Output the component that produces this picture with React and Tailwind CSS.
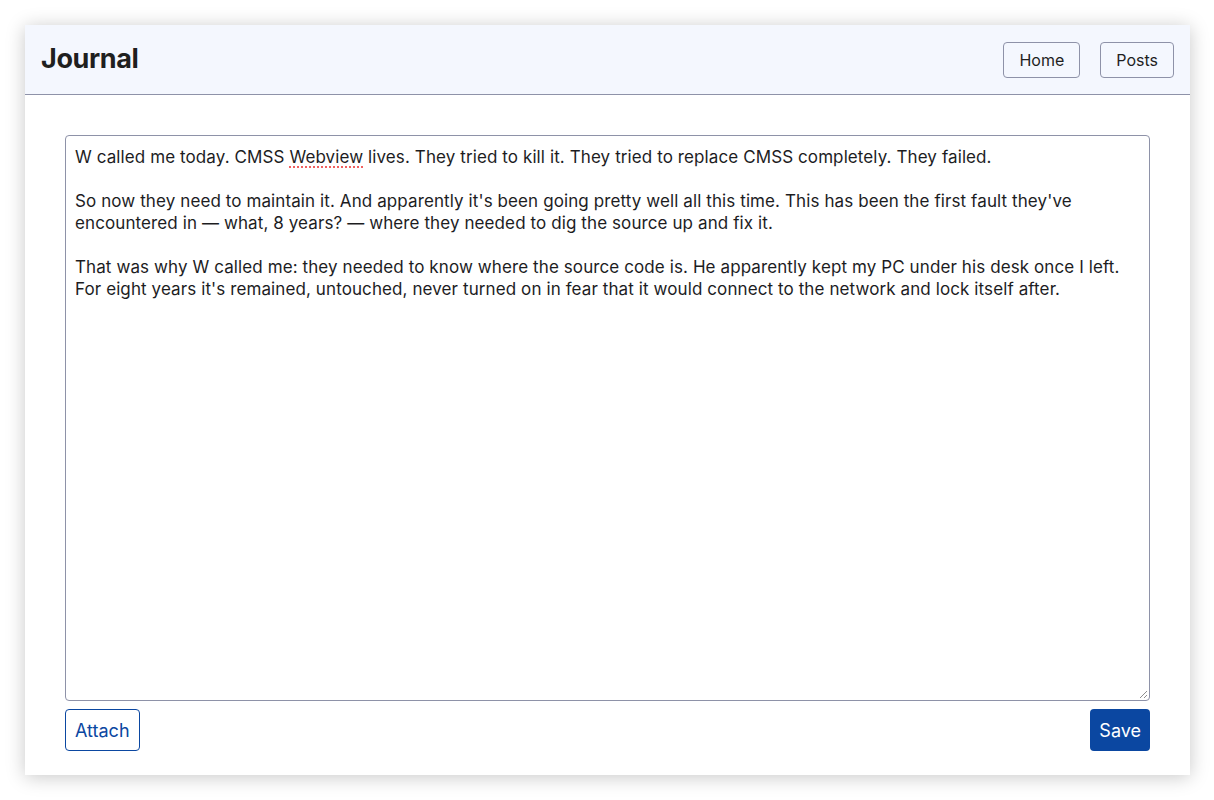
export default function App() {
  return (
    <div className="min-h-screen bg-white pt-[25px] pb-[25px] pl-[25px] pr-[24px]" style={{ fontFamily: 'Inter, "Noto Sans", sans-serif' }}>
      <div className="bg-white shadow-[0_2px_18px_rgba(0,0,0,0.22)]">
        {/* Header */}
        <div className="flex items-center justify-between h-[70px] px-4 bg-[#f4f7fe] border-b border-[#8e92a8]">
          <h1 className="text-[27px] font-bold text-[#1f1f1f] tracking-[-0.4px]">Journal</h1>
          <nav className="flex gap-5">
            <button className="h-9 px-[15px] text-[16px] text-[#1f1f1f] border border-[#8e92a8] rounded-[4px] bg-transparent">
              Home
            </button>
            <button className="h-9 px-[15px] text-[16px] text-[#1f1f1f] border border-[#8e92a8] rounded-[4px] bg-transparent">
              Posts
            </button>
          </nav>
        </div>

        {/* Editor */}
        <div className="px-10 pt-10 pb-6">
          <div className="relative h-[566px] border border-[#8e92a8] rounded-[4px] px-[9px] py-[10px] text-[17px] leading-[22px] tracking-[0.1px] text-[#1d1d1f] whitespace-pre-wrap">
            <p>
              W called me today. CMSS{' '}
              <span className="underline decoration-dotted decoration-[#f06060] decoration-2 underline-offset-[3px]">Webview</span>{' '}
              lives. They tried to kill it. They tried to replace CMSS completely. They failed.
            </p>
            <p className="mt-[22px]">
              So now they need to maintain it. And apparently it's been going pretty well all this time. This has been the first fault they've encountered in — what, 8 years? — where they needed to dig the source up and fix it.
            </p>
            <p className="mt-[22px]">
              That was why W called me: they needed to know where the source code is. He apparently kept my PC under his desk once I left. For eight years it's remained, untouched, never turned on in fear that it would connect to the network and lock itself after.
            </p>
            <svg className="absolute right-[1px] bottom-[1px]" width="9" height="9" viewBox="0 0 9 9">
              <line x1="8" y1="1" x2="1" y2="8" stroke="#8e8e8e" strokeWidth="1" />
              <line x1="8" y1="5" x2="5" y2="8" stroke="#8e8e8e" strokeWidth="1" />
            </svg>
          </div>
          <div className="flex justify-between mt-[8px]">
            <button className="h-[42px] px-[9px] text-[18px] text-[#0b47a1] border border-[#0b47a1] rounded-[4px] bg-white">
              Attach
            </button>
            <button className="h-[42px] px-[9px] text-[18px] text-white bg-[#0b47a1] rounded-[4px]">
              Save
            </button>
          </div>
        </div>
      </div>
    </div>
  );
}
